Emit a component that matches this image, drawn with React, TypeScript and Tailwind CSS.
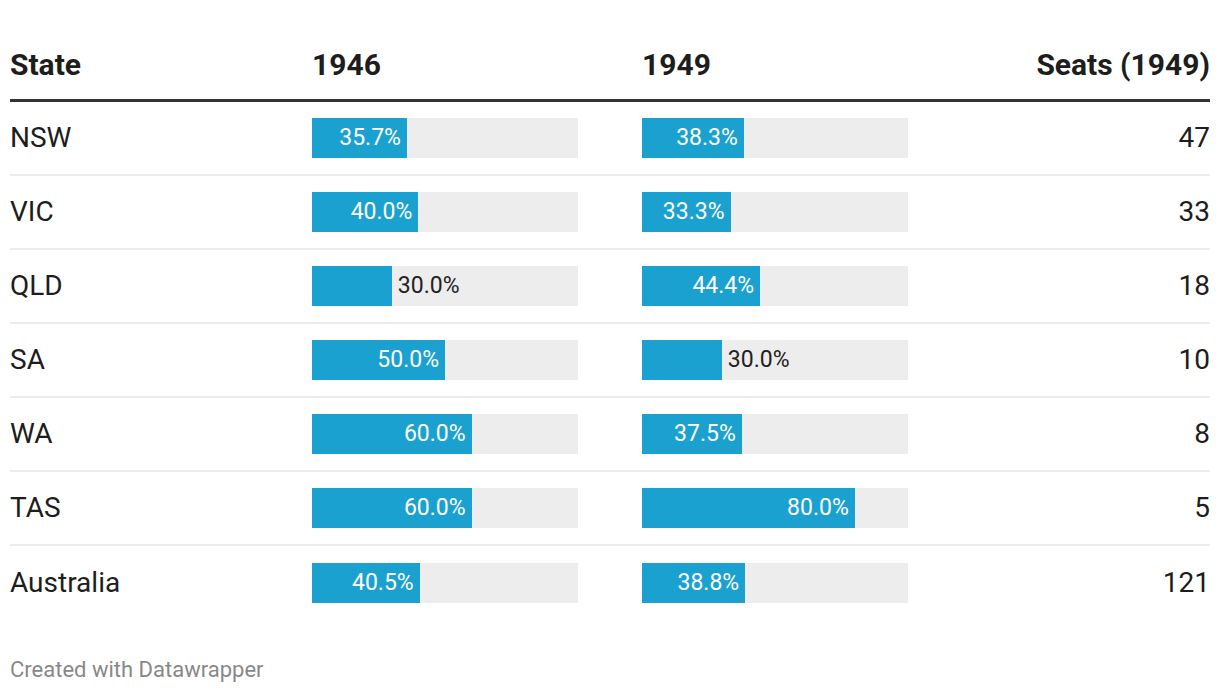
const rows = [
  { state: "NSW", a: 35.7, b: 38.3, seats: 47 },
  { state: "VIC", a: 40.0, b: 33.3, seats: 33 },
  { state: "QLD", a: 30.0, b: 44.4, seats: 18 },
  { state: "SA", a: 50.0, b: 30.0, seats: 10 },
  { state: "WA", a: 60.0, b: 37.5, seats: 8 },
  { state: "TAS", a: 60.0, b: 80.0, seats: 5 },
  { state: "Australia", a: 40.5, b: 38.8, seats: 121 },
];

function Bar({ value }: { value: number }) {
  // labels that don't fit go outside the bar
  const inside = value > 30;
  return (
    <div className="flex h-[40px] w-[266px] items-center bg-[#ededed]">
      <div
        className="flex h-full items-center justify-end bg-[#1aa1cf]"
        style={{ width: `${(value / 100) * 266}px` }}
      >
        {inside && (
          <span className="pr-[6px] text-[23px] text-white">
            {value.toFixed(1)}%
          </span>
        )}
      </div>
      {!inside && (
        <span className="pl-[6px] text-[23px] text-[#222]">
          {value.toFixed(1)}%
        </span>
      )}
    </div>
  );
}

export default function App() {
  return (
    <div
      className="min-h-[694px] bg-white px-[10px] pt-[30px] text-[#1d1d1d]"
      style={{ fontFamily: "Roboto, 'Liberation Sans', sans-serif" }}
    >
      <div className="grid h-[72px] grid-cols-[302px_330px_266px_1fr] items-center border-b-[3px] border-[#333] text-[30px] font-bold">
        <div>State</div>
        <div>1946</div>
        <div>1949</div>
        <div className="text-right">Seats (1949)</div>
      </div>
      {rows.map((r, i) => (
        <div
          key={r.state}
          className={
            "grid h-[74px] grid-cols-[302px_330px_266px_1fr] items-center text-[28px] " +
            (i < rows.length - 1 ? "border-b-2 border-[#ececec]" : "")
          }
        >
          <div>{r.state}</div>
          <Bar value={r.a} />
          <Bar value={r.b} />
          <div className="text-right">{r.seats}</div>
        </div>
      ))}
      <div className="mt-[38px] text-[22px] leading-[24px] text-[#888]">
        Created with Datawrapper
      </div>
    </div>
  );
}
